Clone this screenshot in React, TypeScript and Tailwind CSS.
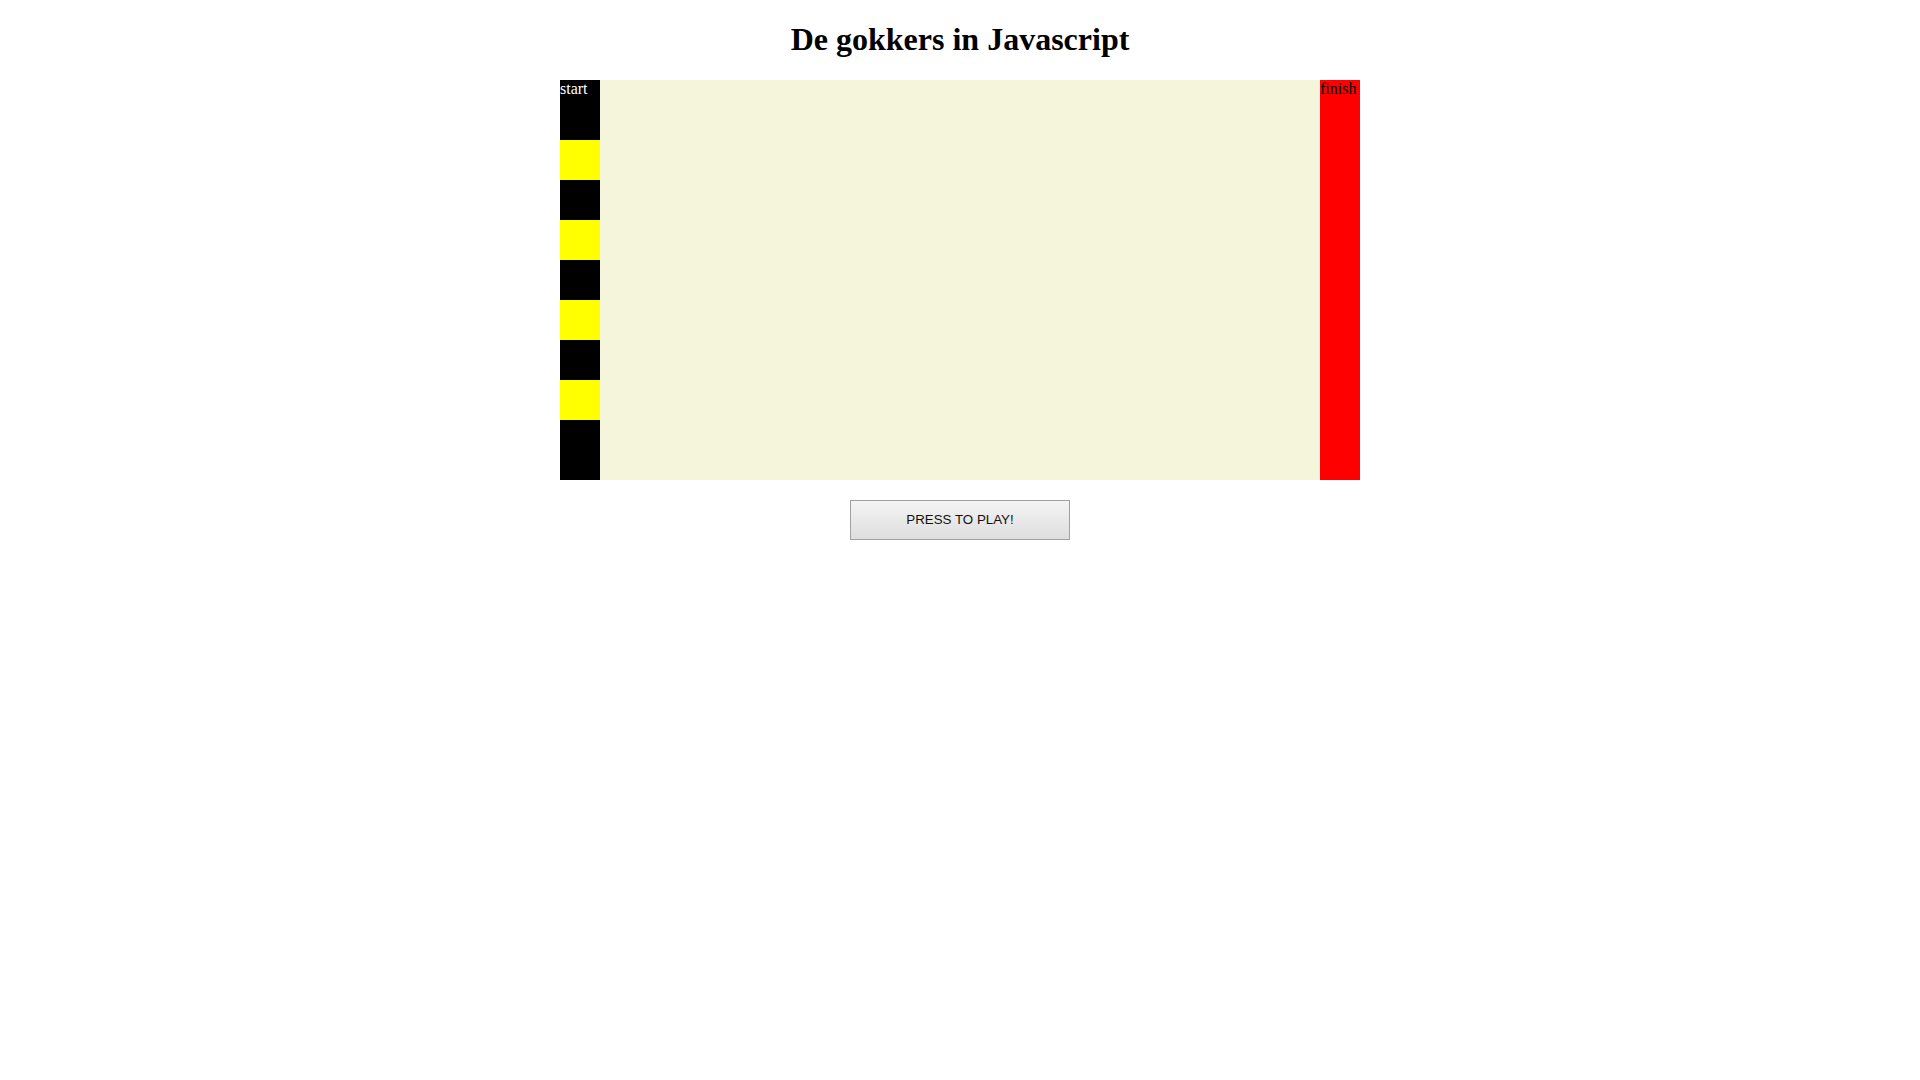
import React from "react";

const lanes = [
  { c: "bg-black", h: "h-[60px]" },
  { c: "bg-[#ffff00]", h: "h-[40px]" },
  { c: "bg-black", h: "h-[40px]" },
  { c: "bg-[#ffff00]", h: "h-[40px]" },
  { c: "bg-black", h: "h-[40px]" },
  { c: "bg-[#ffff00]", h: "h-[40px]" },
  { c: "bg-black", h: "h-[40px]" },
  { c: "bg-[#ffff00]", h: "h-[40px]" },
  { c: "bg-black", h: "h-[60px]" },
];

export default function App() {
  return (
    <div className="min-h-screen bg-white flex flex-col items-center" style={{ fontFamily: '"Liberation Serif", "Times New Roman", serif' }}>
      <h1 className="text-[32px] font-bold leading-[37px] mt-[21px] mb-[22px] text-black">De gokkers in Javascript</h1>
      <div className="flex w-[800px] h-[400px]">
        <div className="relative w-[40px] flex flex-col">
          {lanes.map((l, i) => (
            <div key={i} className={`${l.c} ${l.h} w-full`} />
          ))}
          <span className="absolute left-0 top-0 text-white text-[16px] leading-[18px]">start</span>
        </div>
        <div className="flex-1 bg-[#f5f5dc]" />
        <div className="w-[40px] bg-[#ff0000] text-black text-[16px] leading-[18px]">finish</div>
      </div>
      <button
        className="mt-[20px] w-[220px] h-[40px] border border-[#a0a0a0] bg-gradient-to-b from-[#f4f4f4] to-[#dedede] text-[13.33px] text-[#111]"
        style={{ fontFamily: '"Liberation Sans", Arial, sans-serif' }}
      >
        PRESS TO PLAY!
      </button>
    </div>
  );
}
